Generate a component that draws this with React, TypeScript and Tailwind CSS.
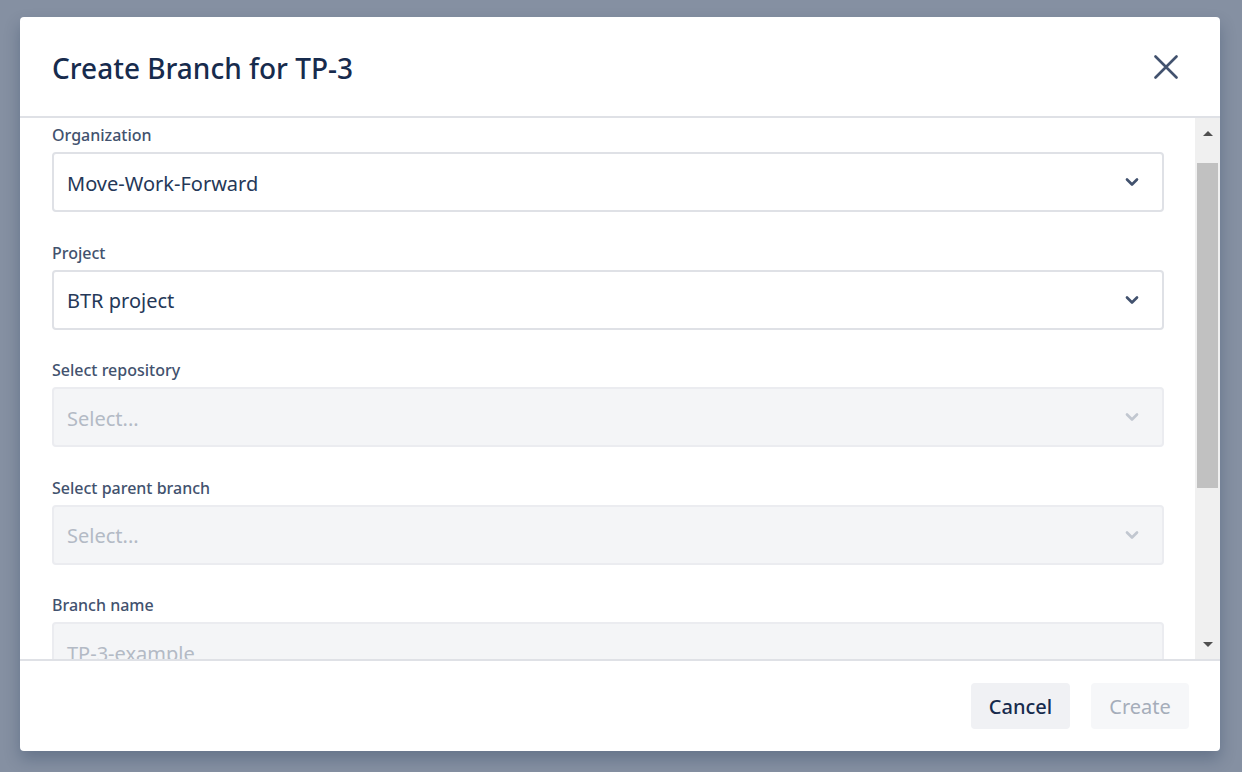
import { ChevronDown } from "lucide-react";

const font = { fontFamily: '"Segoe UI", "Noto Sans", sans-serif' };

function Field({
  label,
  value,
  placeholder,
  disabled,
  select = true,
}: {
  label: string;
  value?: string;
  placeholder?: string;
  disabled?: boolean;
  select?: boolean;
}) {
  return (
    <div className="flex flex-col">
      <label className="text-[16px] leading-[20px] font-medium text-[#42526e] h-[20px]">{label}</label>
      <div
        className={`mt-[7px] h-[60px] shrink-0 rounded-[4px] border-2 flex items-center pl-[13px] pr-[20px] ${
          disabled ? "bg-[#f4f5f7] border-[#ebecf0]" : "bg-white border-[#dfe1e6]"
        }`}
      >
        <span className={`flex-1 text-[20px] pt-[3px] ${value ? "text-[#253858]" : "text-[#b3bac5]"}`}>
          {value ?? placeholder}
        </span>
        {select && (
          <ChevronDown
            size={20}
            strokeWidth={3.2}
            className={disabled ? "text-[#c1c7d0]" : "text-[#42526e]"}
          />
        )}
      </div>
    </div>
  );
}

export default function App() {
  return (
    <div className="w-[1242px] h-[772px] bg-[#8590a2] pt-[17px] px-[20px] overflow-hidden" style={font}>
      <div className="w-[1200px] h-[734px] bg-white rounded-[4px] shadow-[0_8px_16px_rgba(9,30,66,0.25)] flex flex-col overflow-hidden">
        {/* header */}
        <div className="h-[101px] shrink-0 border-b-2 border-[#dfe1e6] flex items-center justify-between pl-[32px] pr-[42px] pt-[3px]">
          <h1 className="text-[28px] font-medium text-[#172b4d]">Create Branch for TP-3</h1>
          <svg width="24" height="24" viewBox="0 0 24 24" className="text-[#42526e] -mt-[3px]">
            <path d="M1.5 1.5 L22.5 22.5 M22.5 1.5 L1.5 22.5" stroke="currentColor" strokeWidth="2.6" strokeLinecap="round" />
          </svg>
        </div>

        {/* body */}
        <div className="flex h-[543px] shrink-0 border-b-2 border-[#dfe1e6]">
          <div className="flex-1 overflow-hidden pl-[32px] pr-[31px] pt-[7px] flex flex-col gap-[30.5px]">
            <Field label="Organization" value="Move-Work-Forward" />
            <Field label="Project" value="BTR project" />
            <Field label="Select repository" placeholder="Select..." disabled />
            <Field label="Select parent branch" placeholder="Select..." disabled />
            <Field label="Branch name" placeholder="TP-3-example" disabled select={false} />
          </div>
          {/* scrollbar */}
          <div className="w-[25px] shrink-0 bg-[#f0f0f0] flex flex-col items-center pr-[2px]">
            <div className="h-[30px] w-full flex items-center justify-center pl-[2px]">
              <div className="w-0 h-0 border-l-[5px] border-r-[5px] border-b-[5px] border-l-transparent border-r-transparent border-b-[#505050]" />
            </div>
            <div className="h-[15px]" />
            <div className="w-[21px] ml-[2px] h-[325px] bg-[#c1c1c1]" />
            <div className="flex-1" />
            <div className="h-[30px] w-full flex items-center justify-center pl-[2px]">
              <div className="w-0 h-0 border-l-[5px] border-r-[5px] border-t-[5px] border-l-transparent border-r-transparent border-t-[#505050]" />
            </div>
          </div>
        </div>

        {/* footer */}
        <div className="flex-1 flex items-center justify-end gap-[21px] pr-[31px]">
          <button className="h-[46px] w-[99px] rounded-[4px] bg-[#f0f1f4] text-[20px] font-medium text-[#172b4d] pt-[2px]">
            Cancel
          </button>
          <button className="h-[46px] w-[98px] rounded-[4px] bg-[#f6f7f9] text-[20px] text-[#a5adba] pt-[2px]">
            Create
          </button>
        </div>
      </div>
    </div>
  );
}
